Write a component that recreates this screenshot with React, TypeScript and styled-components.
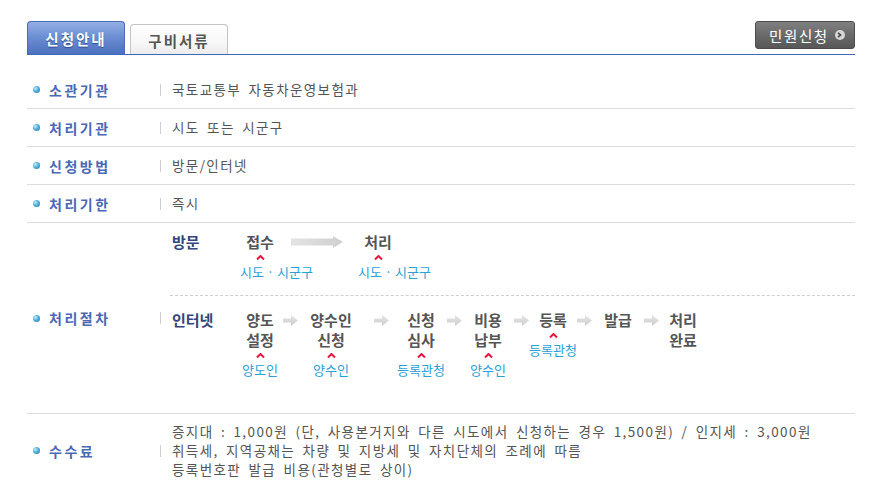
import React from "react";
import styled, { createGlobalStyle } from "styled-components";

const Global = createGlobalStyle`
  html, body { margin: 0; padding: 0; background: #fff; }
  body { font-family: "Noto Sans CJK KR", "Noto Sans", sans-serif; }
`;

const Page = styled.div`
  padding: 21px 0 0 27px;
  width: 828px;
`;

const Header = styled.div`
  display: flex;
  align-items: flex-end;
  border-bottom: 1px solid #4466b8;
  height: 33px;
`;

const Tabs = styled.div`
  display: flex;
  align-items: flex-end;
  gap: 5px;
  flex: 1;
`;

const Tab = styled.div<{ $active?: boolean }>`
  box-sizing: border-box;
  width: 98px;
  height: ${(p) => (p.$active ? 33 : 30)}px;
  border: 1px solid ${(p) => (p.$active ? "#4a6bb8" : "#c4c4c4")};
  border-bottom: none;
  border-radius: 4px 4px 0 0;
  background: ${(p) =>
    p.$active
      ? "linear-gradient(#93afe4 0%, #6d8fd3 45%, #4d70c0 100%)"
      : "linear-gradient(#ffffff 0%, #f7f7f7 60%, #ececec 100%)"};
  color: ${(p) => (p.$active ? "#fff" : "#555")};
  text-shadow: ${(p) => (p.$active ? "0 1px 1px #2d4a8c" : "none")};
  font-size: 14.5px;
  font-weight: 700;
  letter-spacing: 2px;
  display: flex;
  align-items: center;
  justify-content: center;
  padding-top: ${(p) => (p.$active ? 1 : 2)}px;
`;

const ApplyButton = styled.div`
  align-self: flex-start;
  box-sizing: border-box;
  width: 100px;
  height: 28px;
  border: 1px solid #4d4d4d;
  border-radius: 3px;
  background: linear-gradient(#808080 0%, #6a6a6a 50%, #575757 100%);
  color: #fff;
  font-size: 14.5px;
  letter-spacing: 1.6px;
  display: flex;
  align-items: center;
  padding-left: 13px;
  gap: 6px;
`;

const ButtonDot = styled.span`
  width: 10px;
  height: 10px;
  border-radius: 50%;
  background: #d6d6d6;
  display: flex;
  align-items: center;
  justify-content: center;
`;

const Table = styled.div`
  margin-top: 16px;
`;

const Row = styled.div<{ $last?: boolean }>`
  display: flex;
  align-items: center;
  min-height: 38px;
  box-sizing: border-box;
  border-bottom: ${(p) => (p.$last ? "none" : "1px solid #dcdcdc")};
`;

const LabelCell = styled.div`
  width: 133px;
  display: flex;
  align-items: center;
  padding-left: 6px;
  box-sizing: border-box;
`;

const Bullet = styled.span`
  width: 7px;
  height: 7px;
  border-radius: 50%;
  background: radial-gradient(circle at 35% 35%, #c4ecfa 0%, #4fb0dc 45%, #2a73a3 100%);
  margin-right: 9px;
`;

const Label = styled.span`
  font-size: 14px;
  font-weight: 700;
  color: #4a68b5;
  letter-spacing: 2.5px;
`;

const Sep = styled.span`
  width: 1px;
  height: 12px;
  background: #cfcfcf;
  margin-right: 11px;
`;

const Value = styled.div`
  font-size: 13.5px;
  color: #555;
  letter-spacing: 1.4px;
  word-spacing: 3px;
  line-height: 19px;
  white-space: nowrap;
`;

const FeeValue = styled(Value)`
  padding: 8px 0 8px;
`;

const Process = styled.div`
  flex: 1;
  padding: 9px 0 35px;
`;

const FlowRow = styled.div`
  display: flex;
  align-items: flex-start;
`;

const FlowLabel = styled.div`
  width: 66px;
  font-size: 15px;
  font-weight: 700;
  color: #34467c;
  line-height: 20px;
`;

const StepCol = styled.div<{ $w: number }>`
  width: ${(p) => p.$w}px;
  display: flex;
  flex-direction: column;
  align-items: center;
`;

const StepText = styled.div`
  font-size: 15px;
  font-weight: 700;
  color: #555;
  line-height: 20px;
  text-align: center;
  white-space: nowrap;
`;

const Caret = styled.svg`
  display: block;
  margin-top: 3px;
`;

const SubLabel = styled.div<{ $left?: number }>`
  margin-top: 4px;
  font-size: 13px;
  line-height: 16px;
  color: #2b9fd8;
  white-space: nowrap;
  ${(p) => (p.$left !== undefined ? `align-self: flex-start; margin-left: ${p.$left}px;` : "")}
`;

const ArrowCell = styled.div<{ $w: number }>`
  width: ${(p) => p.$w}px;
  height: 20px;
  display: flex;
  align-items: center;
  justify-content: center;
`;

const Dashed = styled.div`
  margin: 15px 0 14px -2px;
  border-top: 1px dashed #cfcfcf;
`;

const CaretIcon = () => (
  <Caret width="9" height="5" viewBox="0 0 9 5">
    <polyline points="1,4.5 4.5,1 8,4.5" fill="none" stroke="#e3153a" strokeWidth="2" />
  </Caret>
);

const SmallArrow = () => (
  <svg width="15" height="11" viewBox="0 0 15 11" style={{ flex: "none" }}>
    <defs>
      <linearGradient id="sa" x1="0" y1="0" x2="0" y2="1">
        <stop offset="0" stopColor="#e6e6e6" />
        <stop offset="1" stopColor="#cdcdcd" />
      </linearGradient>
    </defs>
    <path d="M0 3.5 H8 V0 L15 5.5 L8 11 V7.5 H0 Z" fill="url(#sa)" />
  </svg>
);

const BigArrow = () => (
  <svg width="52" height="12" viewBox="0 0 52 12" style={{ flex: "none" }}>
    <defs>
      <linearGradient id="ba" x1="0" y1="0" x2="1" y2="0">
        <stop offset="0" stopColor="#e4e4e4" />
        <stop offset="1" stopColor="#cfcfcf" />
      </linearGradient>
    </defs>
    <path d="M0 2.5 H42 V0 L52 6 L42 12 V9.5 H0 Z" fill="url(#ba)" />
  </svg>
);

type StepData = { t: string[]; sub?: string; w: number; a?: number; left?: number };

const Step = ({ s }: { s: StepData }) => (
  <StepCol $w={s.w}>
    <StepText>
      {s.t.map((l, i) => (
        <div key={i}>{l}</div>
      ))}
    </StepText>
    {s.sub && (
      <>
        <CaretIcon />
        <SubLabel $left={s.left}>{s.sub}</SubLabel>
      </>
    )}
  </StepCol>
);

const internet: StepData[] = [
  { t: ["양도", "설정"], sub: "양도인", w: 44, a: 16 },
  { t: ["양수인", "신청"], sub: "양수인", w: 66, a: 34 },
  { t: ["신청", "심사"], sub: "등록관청", w: 46, a: 20 },
  { t: ["비용", "납부"], sub: "양수인", w: 48, a: 19 },
  { t: ["등록"], sub: "등록관청", w: 44, a: 18 },
  { t: ["발급"], w: 50, a: 16 },
  { t: ["처리", "완료"], w: 48 },
];

const simpleRows: [string, string][] = [
  ["소관기관", "국토교통부 자동차운영보험과"],
  ["처리기관", "시도 또는 시군구"],
  ["신청방법", "방문/인터넷"],
  ["처리기한", "즉시"],
];

export default function App() {
  return (
    <Page>
      <Global />
      <Header>
        <Tabs>
          <Tab $active>신청안내</Tab>
          <Tab>구비서류</Tab>
        </Tabs>
        <ApplyButton>
          민원신청
          <ButtonDot>
            <svg width="5" height="6" viewBox="0 0 5 6">
              <polyline points="1,0.8 3.6,3 1,5.2" fill="none" stroke="#444" strokeWidth="1.6" />
            </svg>
          </ButtonDot>
        </ApplyButton>
      </Header>
      <Table>
        {simpleRows.map(([k, v]) => (
          <Row key={k}>
            <LabelCell>
              <Bullet />
              <Label>{k}</Label>
            </LabelCell>
            <Sep />
            <Value>{v}</Value>
          </Row>
        ))}
        <Row>
          <LabelCell>
            <Bullet />
            <Label>처리절차</Label>
          </LabelCell>
          <Sep />
          <Process>
            <FlowRow>
              <FlowLabel>방문</FlowLabel>
              <Step s={{ t: ["접수"], sub: "시도 · 시군구", w: 44, left: 2 }} />
              <ArrowCell $w={70}>
                <BigArrow />
              </ArrowCell>
              <Step s={{ t: ["처리"], sub: "시도 · 시군구", w: 52, left: 6 }} />
            </FlowRow>
            <Dashed />
            <FlowRow>
              <FlowLabel>인터넷</FlowLabel>
              {internet.map((s, i) => (
                <React.Fragment key={i}>
                  <Step s={s} />
                  {s.a && (
                    <ArrowCell $w={s.a}>
                      <SmallArrow />
                    </ArrowCell>
                  )}
                </React.Fragment>
              ))}
            </FlowRow>
          </Process>
        </Row>
        <Row $last>
          <LabelCell>
            <Bullet />
            <Label>수수료</Label>
          </LabelCell>
          <Sep />
          <FeeValue>
            <div>증지대 : 1,000원 (단, 사용본거지와 다른 시도에서 신청하는 경우 1,500원) / 인지세 : 3,000원</div>
            <div>취득세, 지역공채는 차량 및 지방세 및 자치단체의 조례에 따름</div>
            <div>등록번호판 발급 비용(관청별로 상이)</div>
          </FeeValue>
        </Row>
      </Table>
    </Page>
  );
}
